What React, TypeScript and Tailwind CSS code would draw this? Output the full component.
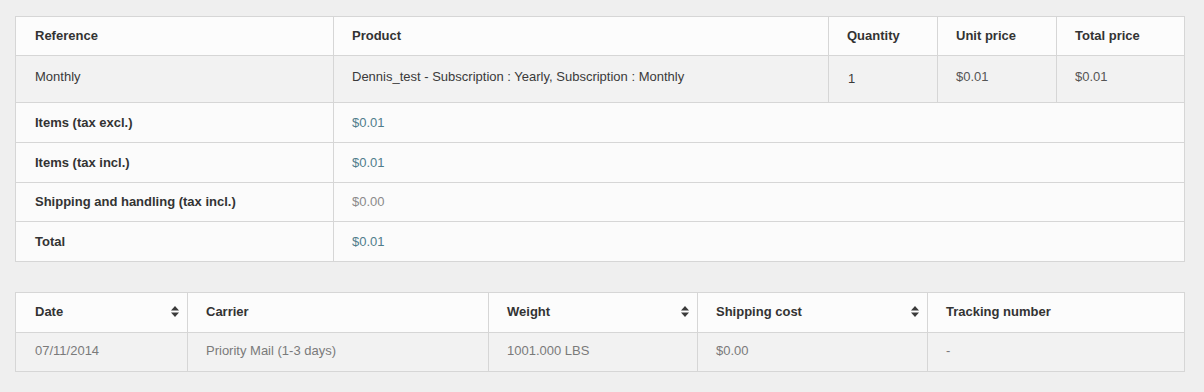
const font = { fontFamily: '"Liberation Sans", Arial, sans-serif' };

function SortIcon() {
  return (
    <svg width="8" height="11" viewBox="0 0 8 11" className="shrink-0">
      <path d="M4 0 L8 4.5 L0 4.5 Z" fill="#3a3a3a" />
      <path d="M0 6.5 L8 6.5 L4 11 Z" fill="#3a3a3a" />
    </svg>
  );
}

const summary = [
  { label: 'Items (tax excl.)', value: '$0.01', color: 'text-[#4f7d8b]', h: 'h-[40px] border-b' },
  { label: 'Items (tax incl.)', value: '$0.01', color: 'text-[#4f7d8b]', h: 'h-[40px] border-b' },
  { label: 'Shipping and handling (tax incl.)', value: '$0.00', color: 'text-[#8a8a8a]', h: 'h-[39px] border-b' },
  { label: 'Total', value: '$0.01', color: 'text-[#4f7d8b]', h: 'h-[39px]' },
];

export default function App() {
  return (
    <div className="w-[1204px] h-[392px] bg-[#efefef] pt-4 pl-[15px]" style={font}>
      {/* Order lines */}
      <div className="w-[1170px] border border-[#d6d6d6] text-[13px]">
        <div className="grid grid-cols-[318px_495px_109px_119px_1fr] bg-[#fcfcfc] font-bold text-[#333] h-[39px] border-b border-[#d6d6d6]">
          <div className="pl-[19px] pb-[1px] flex items-center border-r border-[#d6d6d6]">Reference</div>
          <div className="pl-[18px] pb-[1px] flex items-center border-r border-[#d6d6d6]">Product</div>
          <div className="pl-[18px] pb-[1px] flex items-center border-r border-[#d6d6d6]">Quantity</div>
          <div className="pl-[18px] pb-[1px] flex items-center border-r border-[#d6d6d6]">Unit price</div>
          <div className="pl-[18px] pb-[1px] flex items-center">Total price</div>
        </div>
        <div className="grid grid-cols-[318px_495px_109px_119px_1fr] bg-[#f2f2f2] text-[#3a3a3a] h-[47px] border-b border-[#d6d6d6]">
          <div className="pl-[19px] pt-[11px] border-r border-[#d6d6d6]">Monthly</div>
          <div className="pl-[18px] pt-[11px] border-r border-[#d6d6d6]">Dennis_test - Subscription : Yearly, Subscription : Monthly</div>
          <div className="pl-[19px] pt-[13px] border-r border-[#d6d6d6] text-[#3a3a3a]">1</div>
          <div className="pl-[18px] pt-[11px] border-r border-[#d6d6d6] text-[#555]">$0.01</div>
          <div className="pl-[18px] pt-[11px] text-[#555]">$0.01</div>
        </div>
        {summary.map((row) => (
          <div key={row.label} className={`grid grid-cols-[318px_1fr] bg-[#fbfbfb] border-[#d6d6d6] ${row.h}`}>
            <div className="pl-[19px] flex items-center font-bold text-[#333] border-r border-[#d6d6d6]">{row.label}</div>
            <div className={`pl-[18px] flex items-center ${row.color}`}>{row.value}</div>
          </div>
        ))}
      </div>

      {/* Shipping */}
      <div className="w-[1170px] mt-[30px] border border-[#d6d6d6] text-[13px]">
        <div className="grid grid-cols-[172px_301px_209px_230px_1fr] bg-[#fcfcfc] font-bold text-[#333] h-[40px] border-b border-[#d6d6d6]">
          <div className="pl-[19px] pr-[8px] pb-[2px] flex items-center justify-between border-r border-[#d6d6d6]">
            <span>Date</span>
            <SortIcon />
          </div>
          <div className="pl-[18px] pb-[2px] flex items-center border-r border-[#d6d6d6]">Carrier</div>
          <div className="pl-[18px] pr-[8px] pb-[2px] flex items-center justify-between border-r border-[#d6d6d6]">
            <span>Weight</span>
            <SortIcon />
          </div>
          <div className="pl-[18px] pr-[8px] pb-[2px] flex items-center justify-between border-r border-[#d6d6d6]">
            <span>Shipping cost</span>
            <SortIcon />
          </div>
          <div className="pl-[18px] pb-[2px] flex items-center">Tracking number</div>
        </div>
        <div className="grid grid-cols-[172px_301px_209px_230px_1fr] bg-[#f2f2f2] text-[#7a7a7a] h-[38px]">
          <div className="pl-[19px] pb-[2px] flex items-center border-r border-[#d6d6d6]">07/11/2014</div>
          <div className="pl-[18px] pb-[2px] flex items-center border-r border-[#d6d6d6]">Priority Mail (1-3 days)</div>
          <div className="pl-[18px] pb-[2px] flex items-center border-r border-[#d6d6d6]">1001.000 LBS</div>
          <div className="pl-[18px] pb-[2px] flex items-center border-r border-[#d6d6d6]">$0.00</div>
          <div className="pl-[18px] pb-[2px] flex items-center">-</div>
        </div>
      </div>
    </div>
  );
}
